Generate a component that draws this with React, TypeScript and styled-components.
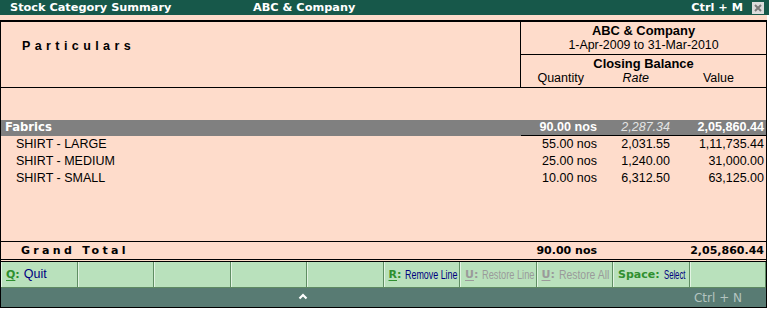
import { FC } from "react";
import styled, { createGlobalStyle } from "styled-components";

const GlobalStyle = createGlobalStyle`
    html, body {
        margin: 0;
        padding: 0;
        background: #ffffff;
    }
    body {
        font-family: "Liberation Sans", Arial, sans-serif;
        font-size: 12.5px;
        color: #000;
    }
`;

type Item = { name: string; qty: string; rate: string; value: string };

const items: Item[] = [
    { name: "SHIRT - LARGE", qty: "55.00 nos", rate: "2,031.55", value: "1,11,735.44" },
    { name: "SHIRT - MEDIUM", qty: "25.00 nos", rate: "1,240.00", value: "31,000.00" },
    { name: "SHIRT - SMALL", qty: "10.00 nos", rate: "6,312.50", value: "63,125.00" },
];

// squeeze: horizontal scale for the narrow bitmap-like labels of the button bar
type Action = { hotkey?: string; label?: string; squeeze?: number; off?: boolean; plain?: boolean };

const actions: Action[] = [
    { hotkey: "Q", label: "Quit" },
    {},
    {},
    {},
    {},
    { hotkey: "R", label: "Remove Line", squeeze: 0.66 },
    { hotkey: "U", label: "Restore Line", squeeze: 0.685, off: true },
    { hotkey: "U", label: "Restore All", squeeze: 0.77, off: true },
    { hotkey: "Space", label: "Select", squeeze: 0.57, plain: true },
    {},
];

const App: FC = () => {
    return (
        <>
            <GlobalStyle />
            <TitleBar>
                <TitleText $width={243}>Stock Category Summary</TitleText>
                <TitleText>ABC &amp; Company</TitleText>
                <TitleSpacer />
                <TitleText>Ctrl + M</TitleText>
                <CloseBox>
                    <svg width="8" height="8" viewBox="0 0 8 8">
                        <path d="M1 1 L7 7 M7 1 L1 7" stroke="#7a7a7a" strokeWidth="2" />
                    </svg>
                </CloseBox>
            </TitleBar>
            <TopGap />
            <Frame>
                <Header>
                    <ParticularsCell>Particulars</ParticularsCell>
                    <PeriodCell>
                        <HeadBlock $divider>
                            <HeadBold>ABC &amp; Company</HeadBold>
                            <HeadLine>1-Apr-2009 to 31-Mar-2010</HeadLine>
                        </HeadBlock>
                        <HeadBlock>
                            <HeadBold>Closing Balance</HeadBold>
                            <ColLabels>
                                <ColLabel $pad={15}>Quantity</ColLabel>
                                <ColLabel $pad={23} $italic>
                                    Rate
                                </ColLabel>
                                <ColLabel $pad={32}>Value</ColLabel>
                            </ColLabels>
                        </HeadBlock>
                    </PeriodCell>
                </Header>
                <Body>
                    <GroupRow>
                        <GroupName>Fabrics</GroupName>
                        <GroupNum>90.00 nos</GroupNum>
                        <GroupNum $light>2,287.34</GroupNum>
                        <GroupNum>2,05,860.44</GroupNum>
                    </GroupRow>
                    {items.map((item) => (
                        <ItemRow key={item.name}>
                            <ItemName>{item.name}</ItemName>
                            <ItemNum>{item.qty}</ItemNum>
                            <ItemNum>{item.rate}</ItemNum>
                            <ItemNum>{item.value}</ItemNum>
                        </ItemRow>
                    ))}
                </Body>
                <TotalRow>
                    <TotalLabel>Grand Total</TotalLabel>
                    <TotalNum>90.00 nos</TotalNum>
                    <TotalNum />
                    <TotalNum>2,05,860.44</TotalNum>
                </TotalRow>
                <ButtonBar>
                    {actions.map((a, i) => (
                        <ActionButton key={i}>
                            {a.hotkey && (
                                <>
                                    <HotKey $off={a.off} $plain={a.plain}>
                                        {a.hotkey}
                                    </HotKey>
                                    <KeyColon $off={a.off}>:</KeyColon>
                                    <ActionLabel $squeeze={a.squeeze} $off={a.off}>
                                        {a.label}
                                    </ActionLabel>
                                </>
                            )}
                        </ActionButton>
                    ))}
                </ButtonBar>
                <StatusStrip>
                    <Caret>
                        <svg width="10" height="7" viewBox="0 0 10 7">
                            <polyline points="1.5,5.5 5,2 8.5,5.5" fill="none" stroke="#ffffff" strokeWidth="2.2" />
                        </svg>
                    </Caret>
                    <StatusText>Ctrl + N</StatusText>
                </StatusStrip>
            </Frame>
        </>
    );
};

export default App;

const TitleBar = styled.div`
    display: flex;
    align-items: center;
    width: 769px;
    height: 15px;
    padding-left: 10px;
    box-sizing: border-box;
    background: #17584a;
`;

const TitleText = styled.div<{ $width?: number }>`
    width: ${(p) => (p.$width ? `${p.$width}px` : "auto")};
    font-family: "DejaVu Sans", Verdana, sans-serif;
    font-weight: 700;
    font-size: 11.3px;
    line-height: 15px;
    color: #ffffff;
    white-space: nowrap;
`;

const TitleSpacer = styled.div`
    flex: 1;
`;

const CloseBox = styled.div`
    display: flex;
    align-items: center;
    justify-content: center;
    width: 12px;
    height: 12px;
    margin: 0 5px 0 9px;
    background: #dcdcdc;
`;

const TopGap = styled.div`
    width: 767px;
    height: 5px;
    background: #fedccb;
`;

const Frame = styled.div`
    display: flex;
    flex-direction: column;
    width: 767px;
    height: 288px;
    box-sizing: border-box;
    border: 1px solid #000;
    border-top-width: 2px;
    background: #fedccb;
`;

const Header = styled.div`
    display: flex;
    height: 66px;
    box-sizing: border-box;
    border-bottom: 1px solid #000;
`;

const ParticularsCell = styled.div`
    flex: 1;
    padding: 17px 0 0 21px;
    font-weight: 700;
    font-size: 12.5px;
    line-height: 15px;
    letter-spacing: 4.4px;
`;

const PeriodCell = styled.div`
    display: flex;
    flex-direction: column;
    width: 246px;
    box-sizing: border-box;
    border-left: 1px solid #000;
`;

const HeadBlock = styled.div<{ $divider?: boolean }>`
    height: ${(p) => (p.$divider ? "33px" : "32px")};
    box-sizing: border-box;
    padding-top: 1px;
    border-bottom: ${(p) => (p.$divider ? "1px solid #000" : "none")};
    text-align: center;
`;

const HeadBold = styled.div`
    font-weight: 700;
    font-size: 12.9px;
    line-height: 15px;
`;

const HeadLine = styled.div`
    font-size: 12.4px;
    line-height: 15px;
`;

const ColLabels = styled.div`
    display: grid;
    grid-template-columns: 78px 73px 1fr;
`;

const ColLabel = styled.div<{ $pad: number; $italic?: boolean }>`
    padding-right: ${(p) => p.$pad}px;
    text-align: right;
    font-size: 12.5px;
    line-height: 15px;
    font-style: ${(p) => (p.$italic ? "italic" : "normal")};
`;

const Body = styled.div`
    height: 153px;
    padding-top: 32px;
    box-sizing: border-box;
`;

const rowGrid = `
    display: grid;
    grid-template-columns: 1fr 78px 73px 94px;
`;

const GroupRow = styled.div`
    ${rowGrid}
    height: 16px;
    background: #808080;
    color: #ffffff;
`;

const GroupName = styled.div`
    padding-left: 4px;
    font-family: "DejaVu Sans", Verdana, sans-serif;
    font-weight: 700;
    font-size: 11.6px;
    line-height: 15px;
`;

const GroupNum = styled.div<{ $light?: boolean }>`
    padding-right: 2px;
    text-align: right;
    border-bottom: 1px solid #000;
    font-size: ${(p) => (p.$light ? "12.5px" : "12.6px")};
    font-weight: ${(p) => (p.$light ? 400 : 700)};
    font-style: ${(p) => (p.$light ? "italic" : "normal")};
    color: ${(p) => (p.$light ? "#e4e4e4" : "#ffffff")};
    line-height: 15px;
`;

const ItemRow = styled.div`
    ${rowGrid}
    height: 17px;
`;

const ItemName = styled.div`
    padding-left: 15px;
    line-height: 17px;
`;

const ItemNum = styled.div`
    padding-right: 2px;
    text-align: right;
    line-height: 17px;
`;

const TotalRow = styled.div`
    ${rowGrid}
    height: 21px;
    box-sizing: border-box;
    border-top: 1px solid #000;
    border-bottom: 3px double #000;
    font-family: "DejaVu Sans", Verdana, sans-serif;
    font-weight: 700;
    font-size: 11px;
    line-height: 17px;
`;

const TotalLabel = styled.div`
    padding-left: 20px;
    letter-spacing: 3.3px;
`;

const TotalNum = styled.div`
    padding-right: 2px;
    text-align: right;
    white-space: nowrap;
`;

const ButtonBar = styled.div`
    display: flex;
    height: 26px;
    box-sizing: border-box;
    background: #b9e1bc;
    border-bottom: 1px solid #5e8a62;
`;

const ActionButton = styled.div`
    flex: 1;
    display: flex;
    align-items: center;
    min-width: 0;
    padding-left: 4px;
    box-sizing: border-box;
    border-left: 1px solid #e2f4e3;
    border-right: 1px solid #5f8e63;
    white-space: nowrap;
    overflow: hidden;
`;

const HotKey = styled.span<{ $off?: boolean; $plain?: boolean }>`
    font-family: "DejaVu Sans", Verdana, sans-serif;
    font-weight: 700;
    font-size: 11px;
    color: ${(p) => (p.$off ? "#9a9a9a" : "#2f8f2f")};
    text-decoration: ${(p) => (p.$plain ? "none" : "underline")};
    text-underline-offset: 2px;
`;

const KeyColon = styled.span<{ $off?: boolean }>`
    font-family: "DejaVu Sans", Verdana, sans-serif;
    font-weight: 700;
    font-size: 11px;
    margin-right: 4px;
    color: ${(p) => (p.$off ? "#9a9a9a" : "#2f8f2f")};
`;

const ActionLabel = styled.span<{ $squeeze?: number; $off?: boolean }>`
    display: inline-block;
    font-size: ${(p) => (p.$squeeze ? "13.5px" : "12.5px")};
    line-height: 15px;
    color: ${(p) => (p.$off ? "#9a9a9a" : "#000080")};
    transform: scaleX(${(p) => p.$squeeze ?? 1});
    transform-origin: left center;
`;

const StatusStrip = styled.div`
    flex: 1;
    display: flex;
    align-items: center;
    background: #587b73;
    position: relative;
`;

const Caret = styled.div`
    position: absolute;
    left: 297px;
    top: 5px;
    display: flex;
`;

const StatusText = styled.div`
    margin-left: auto;
    margin-right: 24px;
    font-family: "DejaVu Sans", Verdana, sans-serif;
    font-size: 12px;
    color: #b4c4c0;
`;
